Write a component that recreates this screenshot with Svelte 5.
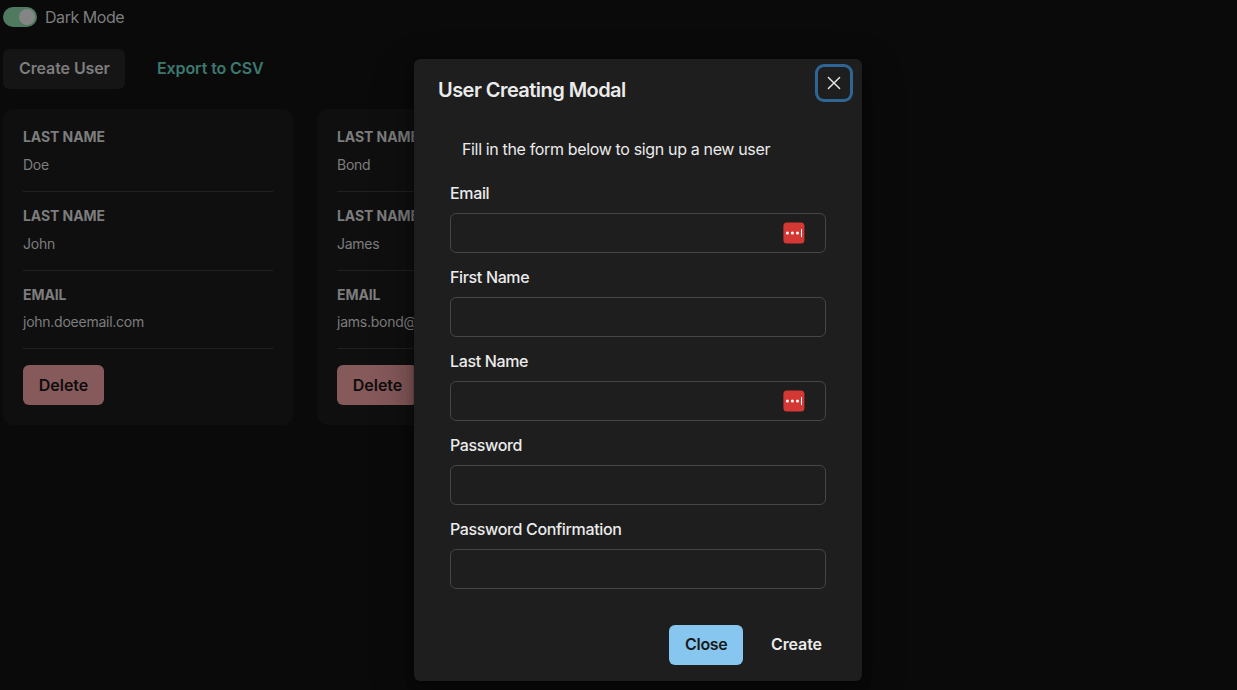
<script>
  let dark = $state(true);
  const users = [
    { last: 'Doe', first: 'John', email: 'john.doeemail.com' },
    { last: 'Bond', first: 'James', email: 'jams.bond@email.com' }
  ];
  const fields = [
    { label: 'Email', type: 'text', badge: true },
    { label: 'First Name', type: 'text', badge: false },
    { label: 'Last Name', type: 'text', badge: true },
    { label: 'Password', type: 'password', badge: false },
    { label: 'Password Confirmation', type: 'password', badge: false }
  ];
</script>

<div class="page">
  <div class="mode">
    <button class="switch" class:on={dark} aria-label="Dark Mode" onclick={() => (dark = !dark)}><i></i></button>
    <span class="mode-label">Dark Mode</span>
  </div>
  <div class="actions">
    <button class="btn create">Create User</button>
    <button class="btn export">Export to CSV</button>
  </div>
  <div class="cards">
    {#each users as user}
      <section class="card">
        <div class="row"><h2>Last name</h2><p>{user.last}</p></div>
        <div class="row"><h2>Last name</h2><p>{user.first}</p></div>
        <div class="row"><h2>Email</h2><p>{user.email}</p></div>
        <button class="btn delete">Delete</button>
      </section>
    {/each}
  </div>
</div>

<div class="overlay">
  <div class="modal" role="dialog" aria-modal="true">
    <header>User Creating Modal</header>
    <button class="close" aria-label="Close">
      <svg width="14" height="14" viewBox="0 0 14 14" fill="none" stroke="currentColor" stroke-width="1.4" stroke-linecap="round"><path d="M1.4 1.4 12.6 12.6M12.6 1.4 1.4 12.6" /></svg>
    </button>
    <div class="body">
      <p class="intro">Fill in the form below to sign up a new user</p>
      {#each fields as field, i}
        <label for="field-{i}">{field.label}</label>
        <div class="control">
          <input id="field-{i}" type={field.type} />
          {#if field.badge}
            <svg class="badge" width="22" height="22" viewBox="0 0 22 22">
              <rect x="0.4" y="0.4" width="21" height="21" rx="3.5" fill="#d33834" />
              <g fill="#fff"><circle cx="4.4" cy="11" r="1.5" /><circle cx="9.4" cy="11" r="1.5" /><circle cx="14.5" cy="11" r="1.5" /><rect x="18" y="7" width="1" height="8" /></g>
            </svg>
          {/if}
        </div>
      {/each}
    </div>
    <footer>
      <button class="btn primary">Close</button>
      <button class="btn ghost">Create</button>
    </footer>
  </div>
</div>

<style>
  :global(body) { background: #0a0a0a; overflow: hidden; }
  .page, .overlay { font: 400 16px/24px Inter, sans-serif; box-sizing: border-box; letter-spacing: -0.35px; }
  .page { height: 690px; padding: 5px 3px; color: #7d7d7d; overflow: hidden; }
  button { font: inherit; color: inherit; letter-spacing: inherit; border: 0; padding: 0; background: none; }
  h2, p { margin: 0; }
  .mode { display: flex; align-items: center; gap: 8px; height: 24px; letter-spacing: -0.45px; }
  .switch { width: 34px; height: 20px; border-radius: 10px; padding: 2px; background: #444; display: flex; }
  .switch.on { background: #4f7a60; justify-content: flex-end; }
  .switch i { width: 16px; height: 16px; border-radius: 50%; background: #858585; }
  .actions { display: flex; gap: 16px; margin-top: 20px; }
  .btn { height: 40px; padding: 0 16px 2px; border-radius: 6px; font-weight: 600; white-space: nowrap; letter-spacing: -0.1px; }
  .create { width: 122px; background: #151515; }
  .export { color: #3d7870; }
  .cards { display: flex; gap: 24px; margin-top: 20px; }
  .card { width: 290px; height: 316px; padding: 20px; box-sizing: border-box; border-radius: 10px; background: #0f0f0f; font-size: 14px; }
  .row { border-bottom: 1px solid #212121; padding-bottom: 16px; margin-bottom: 16px; }
  .row h2 { font-size: 14px; line-height: 16.8px; font-weight: 700; letter-spacing: -0.08px; text-transform: uppercase; }
  .row p { line-height: 21px; margin-top: 8px; letter-spacing: -0.25px; }
  .delete { width: 81px; padding: 0; font-size: 16px; background: #86595b; color: #0d0d0d; letter-spacing: 0; }
  .overlay { position: absolute; inset: 0; padding: 59px 0 0 39px; display: flex; justify-content: center; align-items: flex-start; overflow: hidden; }
  .modal { position: relative; width: 448px; height: 622px; border-radius: 6px; background: #1e1e1e; color: #ebebeb; box-shadow: 0 0 0 1px rgba(0,0,0,.1), 0 5px 10px rgba(0,0,0,.2), 0 15px 40px rgba(0,0,0,.4); }
  header { padding: 16px 24px; font-size: 20px; line-height: 30px; font-weight: 600; letter-spacing: -0.55px; }
  .close { position: absolute; top: 8px; right: 12px; width: 32px; height: 32px; border-radius: 6px; box-shadow: 0 0 0 3px #2f6594; display: grid; place-items: center; }
  .body { padding: 16px 36px 20px; }
  .intro { padding-left: 12px; margin-bottom: 20px; }
  label { display: block; font-weight: 500; margin-bottom: 8px; }
  .control { position: relative; height: 40px; margin-bottom: 12px; }
  .control:last-child { margin-bottom: 0; }
  input { display: block; width: 100%; height: 40px; box-sizing: border-box; padding: 0 16px; border: 1px solid #454545; border-radius: 6px; background: transparent; color: inherit; font: inherit; outline: none; }
  .badge { position: absolute; left: 333px; top: 9px; }
  footer { display: flex; justify-content: flex-end; gap: 12px; padding: 16px 24px; }
  .primary { width: 74px; background: #87c7ef; color: #1a1a1a; letter-spacing: -0.3px; }
  .ghost { width: 83px; }
</style>
